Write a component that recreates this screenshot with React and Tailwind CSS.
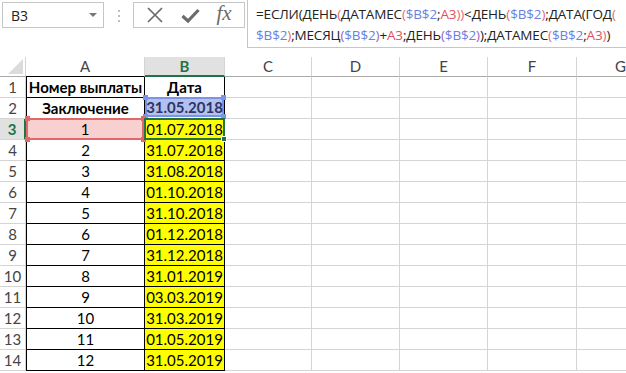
import React from 'react';

const CELL_FONT = { fontFamily: 'Lato, "Liberation Sans", sans-serif' };
const UI_FONT = { fontFamily: '"Open Sans", "Noto Sans", sans-serif' };

const cols = ['A', 'B', 'C', 'D', 'E', 'F', 'G'];
const gridCols = 'grid grid-cols-[26px_119px_80px_87px_88px_88px_89px_88px]';

const rows = [
  ['1', '01.07.2018'],
  ['2', '31.07.2018'],
  ['3', '31.08.2018'],
  ['4', '01.10.2018'],
  ['5', '31.10.2018'],
  ['6', '01.12.2018'],
  ['7', '31.12.2018'],
  ['8', '31.01.2019'],
  ['9', '03.03.2019'],
  ['10', '31.03.2019'],
  ['11', '01.05.2019'],
  ['12', '31.05.2019'],
];

// formula pieces: [text, colour]
const K = '#222222';
const BL = '#6b7fe3';
const RD = '#e2505f';
const PK = '#e8677a';
const PU = '#a15ec4';

const line1 = [
  ['=ЕСЛИ(ДЕНЬ', K], ['(', PK], ['ДАТАМЕС', K], ['(', PK], ['$B$2', BL], [';', K], ['A3', RD], ['))', PK],
  ['<ДЕНЬ', K], ['(', PK], ['$B$2', BL], [')', PK], [';ДАТА(ГОД', K], ['(', PK],
];
const line2 = [
  ['$B$2', BL], [')', PK], [';МЕСЯЦ', K], ['(', PU], ['$B$2', BL], [')', PU], ['+', K], ['A3', RD],
  [';ДЕНЬ', K], ['(', PU], ['$B$2', BL], [')', PU], [');ДАТАМЕС', K], ['(', PK], ['$B$2', BL], [';', K],
  ['A3', RD], [')', PK], [')', K],
];

function Corner({ className, color }) {
  return <div className={`absolute w-[5px] h-[5px] ${className}`} style={{ background: color }} />;
}

function FormulaBar() {
  return (
    <div className="flex h-[48px] bg-white" style={UI_FONT}>
      {/* Name box */}
      <div className="mt-[2px] ml-[2px] w-[102px] h-[26px] border border-[#c6c6c6] flex items-center justify-between pl-[8px] pr-[6px]">
        <span className="text-[14px] text-[#222]">B3</span>
        <span className="w-0 h-0 border-l-[4px] border-r-[4px] border-t-[4px] border-l-transparent border-r-transparent border-t-[#777]" />
      </div>
      {/* dots */}
      <div className="w-[29px] flex flex-col items-center gap-[3px] pt-[10px]">
        <span className="w-[2px] h-[2px] bg-[#bdbdbd]" />
        <span className="w-[2px] h-[2px] bg-[#bdbdbd]" />
        <span className="w-[2px] h-[2px] bg-[#bdbdbd]" />
      </div>
      {/* buttons */}
      <div className="mt-[2px] w-[112px] h-[26px] border border-[#c6c6c6] flex items-center justify-around px-[4px]">
        <svg width="18" height="18" viewBox="0 0 18 18">
          <path d="M2 2 L16 16 M16 2 L2 16" stroke="#6b6b6b" strokeWidth="1.7" fill="none" />
        </svg>
        <svg width="19" height="17" viewBox="0 0 19 17">
          <path d="M1.5 9 L7 14 L17.5 3" stroke="#6b6b6b" strokeWidth="3.2" fill="none" />
        </svg>
        <span className="text-[21px] italic text-[#6b6b6b] leading-none -mt-[3px]" style={{ fontFamily: '"Liberation Serif", serif' }}>fx</span>
      </div>
      {/* formula */}
      <div className="ml-[2px] flex-1 border-l border-b border-[#c6c6c6] pl-[8px] pt-[4px] overflow-hidden">
        {[line1, line2].map((ln, i) => (
          <div key={i} className="whitespace-nowrap text-[13.5px] tracking-[-0.15px] leading-[21px]">
            {ln.map(([t, c], j) => (
              <span key={j} style={{ color: c }}>{t}</span>
            ))}
          </div>
        ))}
      </div>
    </div>
  );
}

function Sheet() {
  const headerCell = (c) => {
    const sel = c === 'B';
    const table = c === 'A' || c === 'B';
    return (
      <div
        key={c}
        className={`h-[20px] flex items-center justify-center text-[15px] ${sel ? 'bg-[#e1e1e1] text-[#217346] font-bold border-b-2 border-b-[#217346]' : 'text-[#444] border-b ' + (table ? 'border-b-black' : 'border-b-[#ababab]')} border-r border-r-[#d4d4d4]`}
        style={CELL_FONT}
      >
        {c}
      </div>
    );
  };

  const rowHead = (n, sel) => (
    <div
      className={`h-[21px] flex items-center justify-center text-[15px] border-b border-b-[#d4d4d4] ${sel ? 'bg-[#e1e1e1] text-[#217346] font-bold border-r-2 border-r-[#217346]' : 'text-[#444] border-r border-r-[#d4d4d4]'}`}
    >
      {n}
    </div>
  );

  const empty = (k) => <div key={k} className="h-[21px] border-r border-b border-[#d4d4d4]" />;
  const emptyCols = (r) => ['C', 'D', 'E', 'F', 'G'].map((c) => empty(c + r));

  return (
    <div className={`${gridCols} mt-[9px] text-black`} style={CELL_FONT}>
      {/* corner */}
      <div className="h-[20px] border-r border-b border-r-[#d4d4d4] border-b-[#ababab] flex items-end justify-end pr-[2px] pb-[2px]">
        <svg width="15" height="15" viewBox="0 0 15 15">
          <path d="M15 0 L15 15 L0 15 Z" fill="#dcdcdc" />
        </svg>
      </div>
      {cols.map(headerCell)}

      {/* row 1 */}
      {rowHead(1)}
      <div className="h-[21px] border-l border-r border-b border-black flex items-center justify-center font-bold text-[15px]">Номер выплаты</div>
      <div className="h-[21px] border-r border-b border-black flex items-center justify-center font-bold text-[15px]">Дата</div>
      {emptyCols(1)}

      {/* row 2 */}
      {rowHead(2)}
      <div className="h-[21px] border-l border-r border-b border-black flex items-center justify-center font-bold text-[15px]">Заключение</div>
      <div className="relative h-[21px] border-r border-b border-black">
        <div className="absolute -top-[1px] left-0 right-0 bottom-[1px] bg-[#b3c1f0] border-2 border-[#7b93ea] flex items-center justify-center font-bold text-[15px] text-[#2b3563]">
          31.05.2018
        </div>
        <Corner color="#7b93ea" className="-top-[3px] -left-[2px]" />
        <Corner color="#7b93ea" className="-top-[3px] -right-[2px]" />
        <Corner color="#7b93ea" className="bottom-[-1px] -left-[2px]" />
        <Corner color="#7b93ea" className="bottom-[-1px] -right-[2px]" />
      </div>
      {emptyCols(2)}

      {/* row 3 */}
      {rowHead(3, true)}
      <div className="relative h-[21px] border-l border-r border-b border-black">
        <div className="absolute -top-[1px] -left-[1px] right-0 -bottom-[1px] bg-[#f8d0d0] border-2 border-[#e06868] flex items-center justify-center text-[15px]">
          1
        </div>
        <Corner color="#e06868" className="-top-[3px] -left-[2px]" />
        <Corner color="#e06868" className="-top-[3px] -right-[2px]" />
        <Corner color="#e06868" className="-bottom-[3px] -left-[2px]" />
        <Corner color="#e06868" className="-bottom-[3px] -right-[2px]" />
      </div>
      <div className="relative h-[21px] border-r border-b border-black">
        <div className="absolute -top-[1px] -left-[1px] -right-[1px] -bottom-[1px] bg-[#ffff00] border-2 border-[#217346] flex items-center justify-center text-[15px]">
          01.07.2018
        </div>
        <div className="absolute -right-[3px] -bottom-[3px] w-[6px] h-[6px] bg-[#217346] border border-white" />
      </div>
      {emptyCols(3)}

      {rows.slice(1).map(([n, d], i) => {
        const r = i + 4;
        return (
          <React.Fragment key={r}>
            {rowHead(r)}
            <div className="h-[21px] border-l border-r border-b border-black flex items-center justify-center text-[15px]">{n}</div>
            <div className="h-[21px] border-r border-b border-black bg-[#ffff00] flex items-center justify-center text-[15px]">{d}</div>
            {emptyCols(r)}
          </React.Fragment>
        );
      })}
    </div>
  );
}

export default function App() {
  return (
    <div className="w-[626px] h-[373px] overflow-hidden bg-white">
      <FormulaBar />
      <Sheet />
    </div>
  );
}
